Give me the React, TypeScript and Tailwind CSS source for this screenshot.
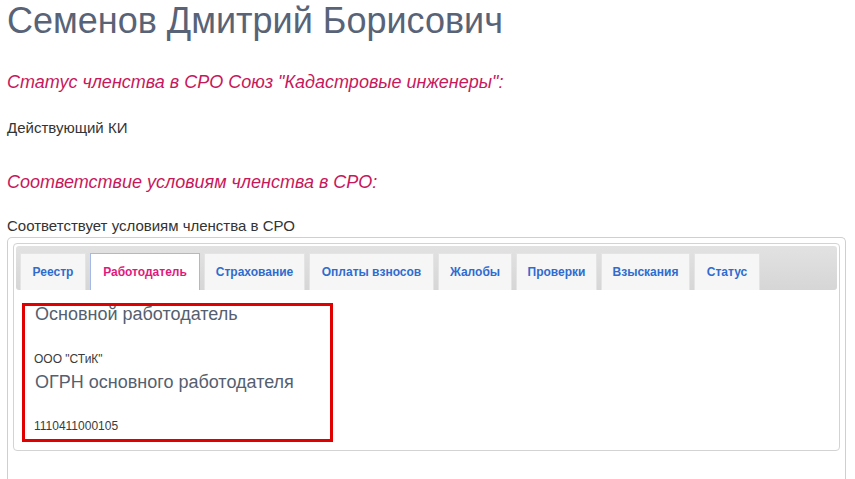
const tabs = [
  { label: "Реестр", w: "w-[66px]" },
  { label: "Работодатель", w: "w-[110px]" },
  { label: "Страхование", w: "w-[101px]" },
  { label: "Оплаты взносов", w: "w-[125px]" },
  { label: "Жалобы", w: "w-[74px]" },
  { label: "Проверки", w: "w-[81px]" },
  { label: "Взыскания", w: "w-[89px]" },
  { label: "Статус", w: "w-[66px]" },
];

function Tabs() {
  return (
    <div className="flex gap-[4px] rounded-[3px] bg-gradient-to-b from-[#e2e2e2] to-[#d6d6d6] pl-[4px] pt-[7px]">
      {tabs.map((t) =>
        t.label === "Работодатель" ? (
          <div
            key={t.label}
            className={`${t.w} flex h-[37px] items-center justify-center border border-b-0 border-[#a6b9e6] bg-white text-[12px] font-bold text-[#e2197c]`}
          >
            {t.label}
          </div>
        ) : (
          <div
            key={t.label}
            className={`${t.w} flex h-[37px] items-center justify-center border border-b-0 border-[#e4e4e4] bg-[#f6f6f6] text-[12px] font-bold text-[#2f6ccf]`}
          >
            {t.label}
          </div>
        )
      )}
    </div>
  );
}

export default function App() {
  return (
    <div className="min-h-[479px] w-[855px] bg-white px-[7px] font-['Liberation_Sans',Arial,sans-serif]">
      <h1 className="pt-[1px] text-[36px] leading-[40px] text-[#596377]">Семенов Дмитрий Борисович</h1>

      <h2 className="mt-[31px] text-[18px] italic leading-[20px] text-[#c8185c]">
        Статус членства в СРО Союз "Кадастровые инженеры":
      </h2>
      <p className="mt-[26px] text-[15px] leading-[20px] text-[#333333]">Действующий КИ</p>

      <h2 className="mt-[34px] text-[18px] italic leading-[20px] text-[#c8185c]">
        Соответствие условиям членства в СРО:
      </h2>
      <p className="mt-[24px] text-[15px] leading-[20px] text-[#333333]">Соответствует условиям членства в СРО</p>

      <div className="mt-[1px] h-[243px] w-[839px] rounded-t-[5px] border border-b-0 border-[#cfcfcf] px-[5px] pt-[5px]">
        <div className="rounded-[4px] border border-[#d3d3d3] p-[2px] pb-[8px]">
          <Tabs />
          <div className="mt-[13px] ml-[6px] w-[311px] border-[3px] border-[#e00000] pl-[9px] pr-[10px] pb-[6px]">
            <div className="-mt-[2px] pl-[1px] text-[18px] leading-[20px] text-[#555f6f]">Основной работодатель</div>
            <div className="mt-[28px] text-[12px] leading-[14px] text-[#3a3a3a]">ООО "СТиК"</div>
            <div className="mt-[6px] pl-[1px] text-[18px] leading-[20px] text-[#555f6f]">ОГРН основного работодателя</div>
            <div className="mt-[27px] text-[12px] leading-[14px] text-[#3a3a3a]">1110411000105</div>
          </div>
        </div>
      </div>
    </div>
  );
}
